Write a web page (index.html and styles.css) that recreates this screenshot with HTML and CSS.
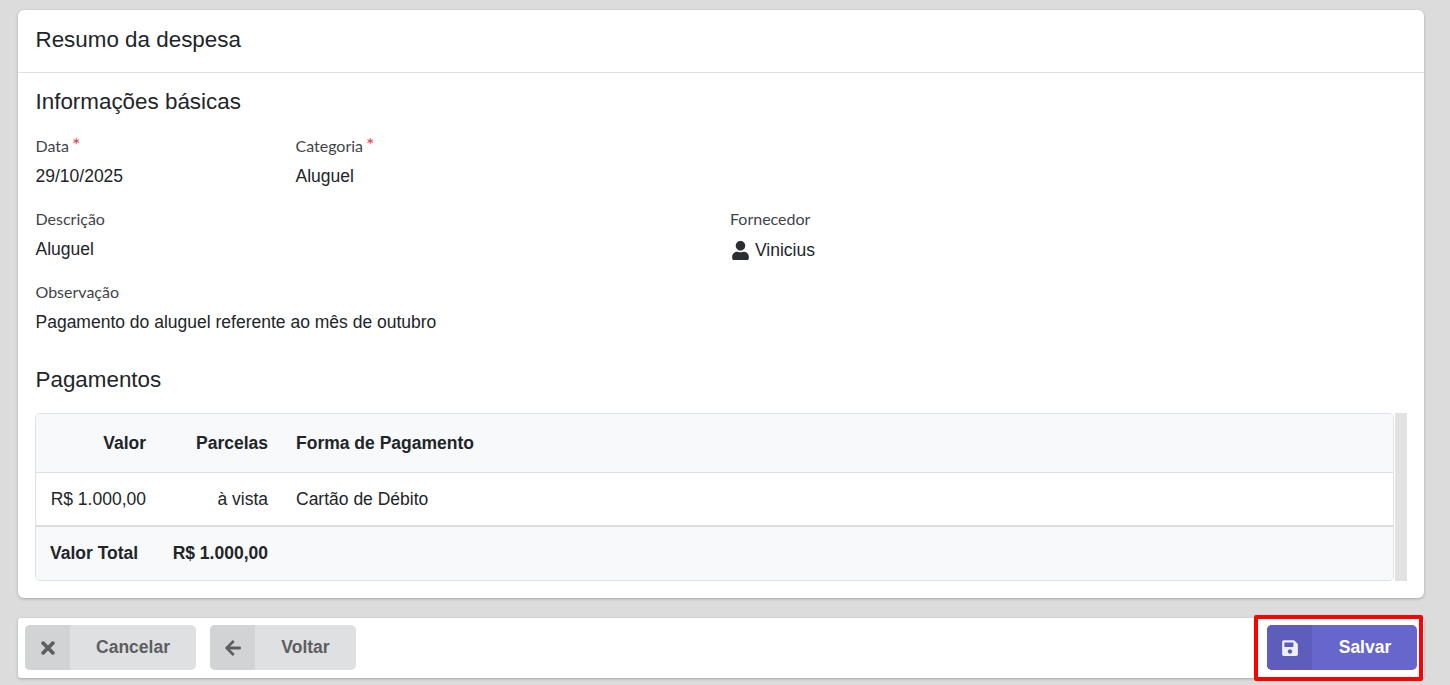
FILE: index.html
```html
<!DOCTYPE html>
<html lang="pt-BR">
<head>
<meta charset="utf-8">
<title>Resumo da despesa</title>
<link rel="stylesheet" href="styles.css">
</head>
<body>
<div class="page">
  <section class="card">
    <header class="card-header"><h1>Resumo da despesa</h1></header>
    <div class="card-body">
      <h2 class="section-title">Informações básicas</h2>
      <div class="row row-top">
        <div class="field field-date"><span class="label">Data<sup class="req">*</sup></span><span class="value">29/10/2025</span></div>
        <div class="field"><span class="label">Categoria<sup class="req">*</sup></span><span class="value">Aluguel</span></div>
      </div>
      <div class="row row-half">
        <div class="field"><span class="label">Descrição</span><span class="value">Aluguel</span></div>
        <div class="field"><span class="label">Fornecedor</span>
          <span class="value value-icon">
            <svg class="user-icon" viewBox="0 0 448 512" aria-hidden="true"><path fill="#2b2e33" d="M224 256c70.700 0 128-57.300 128-128S294.700 0 224 0 96 57.300 96 128s57.300 128 128 128zm89.600 32h-16.700c-22.200 10.200-46.900 16-72.900 16s-50.600-5.800-72.900-16h-16.700C60.200 288 0 348.200 0 422.400V464c0 26.500 21.500 48 48 48h352c26.500 0 48-21.500 48-48v-41.600c0-74.200-60.200-134.400-134.400-134.400z"/></svg>
            Vinicius
          </span>
        </div>
      </div>
      <div class="row">
        <div class="field"><span class="label">Observação</span><span class="value">Pagamento do aluguel referente ao mês de outubro</span></div>
      </div>
      <h2 class="section-title section-pay">Pagamentos</h2>
      <div class="table-wrap">
        <div class="table-box">
          <table>
            <thead>
              <tr><th class="num col-valor">Valor</th><th class="num col-parc">Parcelas</th><th class="txt">Forma de Pagamento</th></tr>
            </thead>
            <tbody>
              <tr><td class="num">R$ 1.000,00</td><td class="num">à vista</td><td class="txt">Cartão de Débito</td></tr>
            </tbody>
            <tfoot>
              <tr><td class="txt-total">Valor Total</td><td class="num">R$ 1.000,00</td><td></td></tr>
            </tfoot>
          </table>
        </div>
        <div class="scroll-track"></div>
      </div>
    </div>
  </section>
  <footer class="actions">
    <button class="btn btn-gray btn-cancel" type="button">
      <span class="btn-icon"><svg class="icon-times" viewBox="0 0 352 512" aria-hidden="true"><path fill="currentColor" d="M242.720 256l100.070-100.070c12.280-12.280 12.280-32.190 0-44.480l-22.240-22.240c-12.280-12.280-32.190-12.280-44.480 0L176 189.280 75.930 89.210c-12.280-12.280-32.190-12.280-44.480 0L9.210 111.450c-12.280 12.280-12.280 32.190 0 44.480L109.280 256 9.210 356.070c-12.280 12.280-12.280 32.190 0 44.480l22.240 22.240c12.280 12.280 32.200 12.280 44.480 0L176 322.720l100.070 100.070c12.280 12.280 32.200 12.280 44.480 0l22.240-22.240c12.280-12.280 12.280-32.190 0-44.480L242.720 256z"/></svg></span>
      <span class="btn-text">Cancelar</span>
    </button>
    <button class="btn btn-gray btn-back" type="button">
      <span class="btn-icon"><svg viewBox="0 0 448 512" aria-hidden="true"><path fill="currentColor" d="M257.500 445.100l-22.200 22.200c-9.400 9.400-24.600 9.400-33.900 0L7 273c-9.400-9.400-9.400-24.600 0-33.900L201.400 44.700c9.400-9.400 24.600-9.400 33.900 0l22.200 22.200c9.500 9.500 9.300 25-.4 34.300L136.600 216H424c13.300 0 24 10.700 24 24v32c0 13.300-10.700 24-24 24H136.600l120.500 114.800c9.800 9.300 10 24.800.4 34.300z"/></svg></span>
      <span class="btn-text">Voltar</span>
    </button>
    <div class="save-mark">
      <button class="btn btn-save" type="button">
        <span class="btn-icon"><svg viewBox="0 0 448 512" aria-hidden="true"><path fill="currentColor" d="M433.941 129.941l-83.882-83.882A48 48 0 0 0 316.118 32H48C21.490 32 0 53.490 0 80v352c0 26.510 21.490 48 48 48h352c26.510 0 48-21.490 48-48V163.882a48 48 0 0 0-14.059-33.941zM224 416c-35.346 0-64-28.654-64-64 0-35.346 28.654-64 64-64s64 28.654 64 64c0 35.346-28.654 64-64 64zm96-304.520V212c0 6.627-5.373 12-12 12H76c-6.627 0-12-5.373-12-12V108c0-6.627 5.373-12 12-12h228.520c3.183 0 6.235 1.264 8.485 3.515l3.480 3.480A11.996 11.996 0 0 1 320 111.480z"/></svg></span>
        <span class="btn-text">Salvar</span>
      </button>
    </div>
  </footer>
</div>
</body>
</html>
```

FILE: styles.css
```css
*, *::before, *::after { box-sizing: border-box; }
html, body { height: 100%; }
body {
  margin: 0;
  background: #dcdcdc;
  color: #212529;
  font-family: "Liberation Sans", Arial, sans-serif;
  font-size: 17.500px;
  overflow: hidden;
}
.page { padding: 10px 26px 0 18px; display: flex; flex-direction: column; gap: 20px; }
.card {
  height: 588px;
  background: #fff;
  border-radius: 6px;
  box-shadow: 0 1px 3px rgba(0, 0, 0, .25);
}
.card-header {
  height: 63px;
  padding: 0 17.500px;
  display: flex;
  align-items: center;
  border-bottom: 1px solid #dee2e6;
}
h1 { margin: 0; font-size: 22.400px; font-weight: 400; line-height: 1.2; position: relative; top: -1px; }
.card-body { padding: 16px 17.500px 0; }
.section-title { margin: 0; font-size: 22.400px; font-weight: 400; line-height: 26px; }
.section-pay { margin-top: 33px; }
.row { display: flex; margin-top: 21px; }
.row-top { margin-top: 21px; }
.row-half .field { flex: 0 0 694.500px; }
.field { display: flex; flex-direction: column; }
.field-date { flex: 0 0 260px; }
.label {
  font-family: "Lato", sans-serif;
  font-size: 16px;
  line-height: 20px;
  color: #3f444a;
}
.req { color: #e8384f; font-size: 20px; line-height: 0; margin-left: 3px; vertical-align: 0; }
.value { margin-top: 8px; font-size: 17.500px; line-height: 24px; }
.value-icon { display: flex; align-items: center; gap: 6px; padding: 1px 0 0 2px; margin-bottom: -1px; }
.user-icon { width: 17px; height: 19px; }
.table-wrap { display: flex; margin: 20px -.5px 0; height: 168px; }
.table-box {
  flex: 1;
  border: 1px solid #dee2e6;
  border-radius: 5px;
  overflow: hidden;
}
.scroll-track { flex: 0 0 12px; margin-left: 1px; background: #e2e2e2; }
table { width: 100%; border-collapse: collapse; table-layout: fixed; }
th { font-weight: 700; background: #f8f9fa; height: 58px; border-bottom: 1px solid #dee2e6; padding: 1px 14px 0; }
td { height: 54px; padding: 1px 14px 0; }
.num { text-align: right; white-space: nowrap; padding-left: 0; }
.txt { text-align: left; }
.col-valor { width: 124px; }
.col-parc { width: 122px; }
tfoot td { background: #f8f9fa; font-weight: 700; border-top: 2px solid #dcdcdc; height: 54px; padding-top: 0; }
.txt-total { white-space: nowrap; }
.actions {
  height: 60px;
  padding: 0 7px 1px;
  background: #fff;
  border-radius: 3px;
  box-shadow: 0 1px 3px rgba(0, 0, 0, .25);
  display: flex;
  align-items: center;
  gap: 14px;
}
.btn {
  height: 45px;
  border: 0;
  padding: 0;
  border-radius: 5px;
  display: flex;
  align-items: stretch;
  overflow: hidden;
  font: 700 17.500px "Liberation Sans", Arial, sans-serif;
}
.btn-icon { flex: 0 0 45px; display: flex; align-items: center; justify-content: center; }
.btn-icon svg { width: 16px; height: 18px; }
.btn-icon .icon-times { width: 14px; height: 20px; }
.btn-text { flex: 1; display: flex; align-items: center; justify-content: center; }
.btn-gray { background: #dfe0e2; color: #5d5e60; }
.btn-gray .btn-icon { background: #d2d3d5; }
.btn-cancel { width: 171px; }
.btn-back { width: 146px; }
.save-mark {
  margin-left: auto;
  position: relative;
}
.save-mark::after {
  content: "";
  position: absolute;
  left: -13px;
  top: -10px;
  width: 169px;
  height: 66px;
  border: 4px solid #fe0000;
  border-radius: 2px;
  pointer-events: none;
}
.btn-save { width: 150px; background: #6766cc; color: #fff; }
.btn-save .btn-icon { background: #5e5dbc; color: #f0f0fa; }
.btn-save .btn-text { padding-left: 1px; }
```
